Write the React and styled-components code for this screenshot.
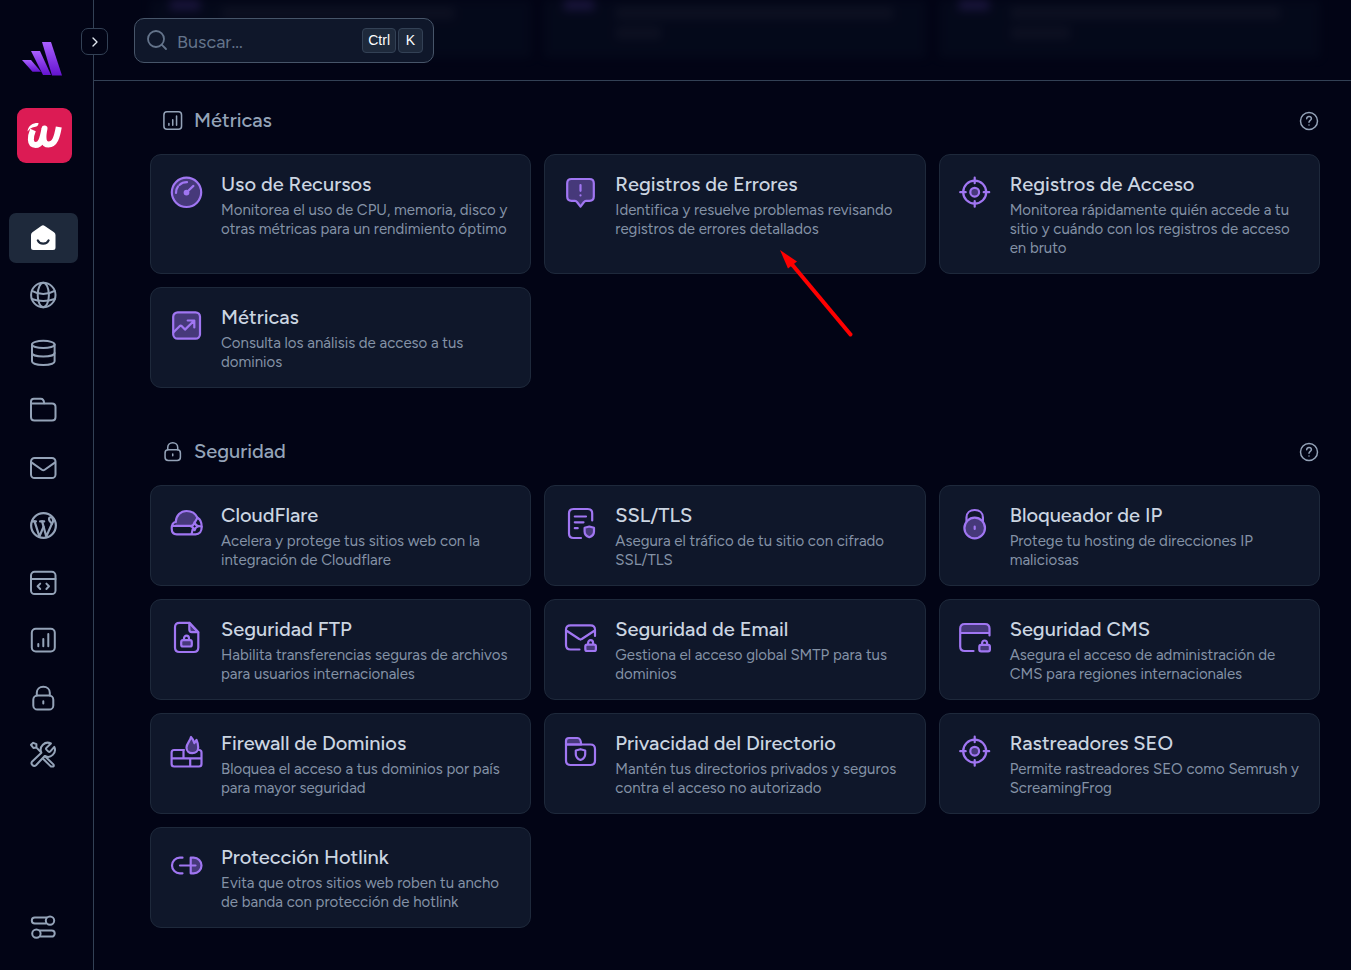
import React from 'react'
import styled, { createGlobalStyle } from 'styled-components'
import { ChevronRight, Search } from 'lucide-react'
import { TbBrandWordpress } from 'react-icons/tb'

const GlobalStyle = createGlobalStyle`
    *, *::before, *::after {
        box-sizing: border-box;
    }
    body {
        margin: 0;
        background-color: #020415;
        font-family: Figtree, Lato, "Liberation Sans", sans-serif;
    }
    a {
        color: inherit;
        text-decoration: none;
    }
    svg {
        display: block;
        flex-shrink: 0;
    }
`

const Page = styled.div`
    display: flex;
    min-height: 100vh;
`

const Sidebar = styled.aside`
    position: relative;
    display: flex;
    flex-direction: column;
    align-items: center;
    flex-shrink: 0;
    width: 94px;
    padding: 42px 15px 18px 9px;
    border-right: 1px solid #334155;
`

const Collapse = styled.button`
    position: absolute;
    top: 28px;
    right: -15px;
    z-index: 3;
    display: flex;
    align-items: center;
    justify-content: center;
    width: 27px;
    height: 27px;
    padding: 0;
    color: #e2e8f0;
    background-color: #020415;
    border: 1px solid #334155;
    border-radius: 7px;
    cursor: pointer;
`

const Brand = styled.a`
    margin: 0 2px 32px 0;
`

const Badge = styled.a`
    width: 55px;
    height: 55px;
    margin: 0 0 50px 2px;
    border-radius: 9px;
    background-color: #dc1b54;
`

const Nav = styled.nav`
    display: flex;
    flex-direction: column;
    justify-content: space-between;
    align-self: stretch;
    height: 567px;
    margin-bottom: auto;
`

const NavItem = styled.a`
    display: flex;
    align-items: center;
    justify-content: center;
    height: 50px;
    padding-right: 1px;
    border-radius: 7px;
    color: ${props => props.$active ? "#fff" : "#94a3b8"};
    background-color: ${props => props.$active ? "#1e293b" : "transparent"};
`

const Main = styled.main`
    flex: 1;
    min-width: 0;
`

const Header = styled.header`
    position: relative;
    display: flex;
    align-items: center;
    height: 81px;
    padding: 0 40px;
    border-bottom: 1px solid #334155;
`

/* what has scrolled under the header, seen through its frosted glass */
const Frosted = styled.div`
    position: absolute;
    inset: 0;
    display: grid;
    grid-template-columns: repeat(3, 1fr);
    gap: 13px;
    padding: 0 31px 22px 56px;
    overflow: hidden;
    filter: blur(5px);
    opacity: .28;
`

const FrostedCard = styled.div`
    display: flex;
    gap: 22px;
    padding-left: 20px;
    background-color: #0c1628;
`

const FrostedIcon = styled.div`
    width: 30px;
    height: 10px;
    background-color: #5a42a4;
`

const FrostedText = styled.div`
    display: flex;
    flex-direction: column;
    gap: 8px;
    padding-top: 7px;
`

const FrostedLine = styled.div`
    width: ${props => props.$width}px;
    height: 12px;
    background-color: #2a3142;
`

const SearchBox = styled.label`
    position: relative;
    display: flex;
    align-items: center;
    width: 300px;
    height: 45px;
    padding: 0 10px;
    color: #64748b;
    background-color: #0f172a;
    border: 1px solid #475569;
    border-radius: 10px;
`

const SearchInput = styled.input`
    flex: 1;
    min-width: 0;
    margin-left: 8px;
    padding: 3px 0 0;
    border: 0;
    outline: 0;
    background: transparent;
    color: #e2e8f0;
    font-family: inherit;
    font-size: 18px;
    &::placeholder {
        color: #64748b;
        opacity: 1;
    }
`

const Key = styled.kbd`
    min-width: 25px;
    height: 25px;
    margin-left: 2px;
    padding: 0 5px;
    border: 1px solid #334155;
    border-radius: 4px;
    background-color: #1e293b;
    color: #fff;
    font-family: "Liberation Sans", Arial, sans-serif;
    font-size: 14px;
    line-height: 22px;
    text-align: center;
`

const Content = styled.div`
    display: flex;
    flex-direction: column;
    gap: 51px;
    padding: 27px 31px 30px 56px;
`

const SectionHead = styled.div`
    display: flex;
    align-items: center;
    gap: 10px;
    height: 24px;
    margin-bottom: 22px;
    padding-left: 11px;
    color: #94a3b8;
`

const SectionTitle = styled.h2`
    flex: 1;
    margin: 0;
    font-size: 20px;
    font-weight: 500;
    line-height: 24px;
`

const HelpButton = styled.button`
    padding: 0;
    border: 0;
    background: none;
    color: #94a3b8;
    cursor: pointer;
`

const Grid = styled.div`
    display: grid;
    grid-template-columns: repeat(3, 1fr);
    gap: 13px;
`

const Card = styled.a`
    position: relative;
    display: flex;
    align-items: flex-start;
    gap: 17px;
    padding: 17px 19px 15px;
    border: 1px solid #1e293b;
    border-radius: 11px;
    background-color: #0f172a;
    & > svg {
        margin-top: 3px;
    }
`

const CardTitle = styled.h3`
    margin: 0 0 5px;
    color: #cbd5e1;
    font-size: 20px;
    font-weight: 500;
    line-height: 24px;
`

const CardText = styled.p`
    margin: 0;
    color: #8492a6;
    font-size: 15px;
    line-height: 19px;
`

const Pointer = styled.span`
    position: absolute;
    top: 95px;
    left: 235px;
    z-index: 2;
    pointer-events: none;
`

/* sidebar and section icons */

function LineIcon({ size = 30, stroke = 2, children }) {
  return (
    <svg width={size} height={size} viewBox="0 0 30 30" fill="none" stroke="currentColor"
        strokeWidth={stroke} strokeLinecap="round" strokeLinejoin="round" aria-hidden="true">
        {children}
    </svg>
  )
}

const lineIcons = {
    home: <>
        <path d="M13.200 2.900Q15 1.600 16.800 2.900L26 9.200Q27.500 10.300 27.500 12V24.500Q27.500 27 25 27H5.500Q3 27 3 24.500V12Q3 10.300 4.400 9.200Z" fill="currentColor" stroke="none" />
        <path d="M9.800 17.400C11.700 21.800 18.700 21.800 20.600 17.400" stroke="#1e293b" strokeWidth="2.200" />
    </>,
    globe: <>
        <circle cx="15.300" cy="15" r="12.200" />
        <ellipse cx="15.300" cy="15" rx="5.600" ry="12.200" />
        <path d="M4 10.800Q15.300 17.200 26.600 10.800M3.800 19Q15.300 23 26.800 19" />
    </>,
    database: <>
        <ellipse cx="15.300" cy="6.400" rx="11.300" ry="3.600" />
        <path d="M4 6.400V23.200C4 25.400 8.900 27 15.300 27S26.600 25.400 26.600 23.200V6.400" />
        <path d="M4 15C4 17 8.900 18.500 15.300 18.500S26.600 17 26.600 15" />
    </>,
    folder: <>
        <path d="M3 8.500V22Q3 25.500 6.500 25.500H24Q27.500 25.500 27.500 22V12Q27.500 8.500 24 8.500Z" />
        <path d="M3 9V6.500Q3 3.700 5.800 3.700H12.800Q15.900 3.700 16.100 8.300" />
    </>,
    mail: <>
        <rect x="3" y="5" width="24.500" height="20" rx="3.600" />
        <path d="M3.800 9.600L13.900 16.800Q15.300 17.800 16.700 16.800L26.800 9.600" />
    </>,
    code: <>
        <rect x="3" y="3.800" width="24.500" height="22.200" rx="3.600" />
        <path d="M3 11H27.500M12.200 15.600L9.600 18.300L12.200 21M18.400 15.600L21 18.300L18.400 21" />
    </>,
    chart: <>
        <rect x="3.800" y="3.700" width="23" height="22.800" rx="4" />
        <path d="M10.300 19V21.300M15.300 14V21.300M20.300 9V21.300" />
    </>,
    lock: <>
        <rect x="5.300" y="12.600" width="20" height="14" rx="4.200" />
        <path d="M8.800 12.600V9.800C8.800 6.200 11.600 3.700 15.300 3.700S21.800 6.200 21.800 9.800V12.600M15.300 18.200V20.600" />
    </>,
    tools: <>
        <path d="M3 4.800L5.200 2.800L8.400 4.200V7.400L5.400 8L3 4.800ZM8.200 7.400L12.600 11.800" />
        <path d="M18.400 7.900A1.300 1.300 0 0 0 18.400 9.600L20.400 11.600A1.300 1.300 0 0 0 22.100 11.600L26.300 6.900A7 7 0 0 1 16.700 16L8 25.200A2.700 2.700 0 0 1 4.200 21.400L13.400 12.700A7 7 0 0 1 22.900 3.500Z" />
        <path d="M17 16.200L25.600 24.600Q26.400 26.600 24.300 26.600H23L14.800 18.500" />
    </>,
    toggles: <>
        <circle cx="22" cy="8.600" r="4.200" />
        <path d="M17.800 11.600H6.800A3 3 0 0 1 6.800 5.600H18.700" />
        <circle cx="8.400" cy="21.600" r="4.200" />
        <path d="M12.600 24.600H23.700A3 3 0 0 0 23.700 18.600H11.700" />
    </>,
}

/* card icons: purple outline, some parts filled with the darker tone */

const tone = "#46397a"

function CardIcon({ children }) {
  return (
    <svg width="34" height="34" viewBox="0 0 34 34" fill="none" stroke="#a076f2"
        strokeWidth="2.200" strokeLinecap="round" strokeLinejoin="round" aria-hidden="true">
        {children}
    </svg>
  )
}

function SmallLock({ x, y }) {
  return (
    <g transform={`translate(${x} ${y})`}>
        <path d="M3.800 5.500V4A2.500 2.800 0 0 1 8.800 4V5.500" />
        <rect x="1" y="5.600" width="10.600" height="6.400" rx="1.800" fill={tone} />
    </g>
  )
}

const cardIcons = {
    gauge: <>
        <circle cx="16.500" cy="17.300" r="14.700" fill={tone} />
        <path d="M6 18C6 15 6.800 13 8 11.500M9.500 10C11.500 8 14 7.200 17 7.200M17 17L23.400 10.900" />
        <circle cx="16.500" cy="17.600" r="1.800" fill="#a076f2" />
    </>,
    errors: <>
        <path d="M7.500 4H25.500Q29.800 4 29.800 8.300V21.500Q29.800 25.800 25.500 25.800H22Q20.800 25.800 20 27L16.500 31.700L13 27Q12.200 25.800 11 25.800H7.500Q3.200 25.800 3.200 21.500V8.300Q3.200 4 7.500 4Z" fill={tone} />
        <path d="M16.500 10V15.800M16.500 20.400V20.500" />
    </>,
    target: <>
        <circle cx="15.700" cy="17.200" r="11.500" />
        <circle cx="15.700" cy="17.200" r="4.400" fill={tone} />
        <path d="M15.700 2.700V8.200M15.700 26.200V31.700M1.200 17.200H6.700M24.700 17.200H30.200" />
    </>,
    trend: <>
        <rect x="3.200" y="4.300" width="26.800" height="26.400" rx="4.500" fill={tone} />
        <path d="M3.500 24.300L9.600 18.200Q10.700 17.300 11.800 18.200L15 21.600L24 12.800M17.700 12.500H24.300V19.500" />
    </>,
    cloud: <>
        <path d="M5.600 19.500C3.800 11 9 5 16.500 5C21.500 5 25.800 7.800 27.500 12L24 17L20.500 20H6Z" fill={tone} stroke="none" />
        <path d="M5.700 16C6.200 9.500 10.500 5 16.500 5C21.500 5 25.600 7.600 27.500 11.800" />
        <path d="M5.700 16C3 16.500 1.700 19.500 1.700 22.500C1.700 26 3.500 28.300 6.800 28.300H25.500C29.500 28.300 31.700 25.200 31.700 21C31.700 16.500 30 13 27.500 11.800L24.800 16.400" />
        <path d="M2.800 19.800H20.500M24.600 16.200C25.200 18.800 26 19.600 28.600 20.200C26 20.800 25.200 21.600 24.600 24.200C24 21.600 23.200 20.800 20.600 20.200C23.200 19.600 24 18.800 24.600 16.200ZM22.800 22.800L21.600 28M28.500 20L31.500 20.500" />
    </>,
    certificate: <>
        <path d="M28.200 14.500V7.500Q28.200 3 23.700 3H9.500Q5 3 5 7.500V27.500Q5 32 9.500 32H17M10.800 10.500H22M10.800 16.300H19.500M10.800 22.200H13.700" />
        <path d="M25.300 20.500L30 21.800V25.500C30 28.500 28 30.300 25.300 31.200C22.600 30.300 20.600 28.500 20.600 25.500V21.800Z" fill={tone} />
    </>,
    padlock: <>
        <path d="M7.500 15V11.500C7.500 6.800 11 4 15.700 4S23.900 6.800 23.900 11.500V15" />
        <circle cx="15.700" cy="22" r="10.300" fill={tone} />
        <path d="M15.700 20.700V23" />
    </>,
    fileLock: <>
        <path d="M19.300 2.800V9.600Q19.300 12.200 21.900 12.200H28.200Z" fill={tone} />
        <path d="M19.300 2.800H9.500Q5 2.800 5 7.300V27.500Q5 32 9.500 32H23.800Q28.300 32 28.300 27.500V12.200L19.300 2.800Z" />
        <SmallLock x={10.200} y={14.500} />
    </>,
    mailLock: <>
        <path d="M31 16V9.800Q31 5.300 26.500 5.300H6.500Q2 5.300 2 9.800V25Q2 29.500 6.500 29.500H15.500M3 11L15.200 19Q16.500 20 17.800 19L30 11" />
        <SmallLock x={20.300} y={19} />
    </>,
    windowLock: <>
        <path d="M1.200 12.500V8.500Q1.200 4 5.700 4H26Q30.500 4 30.500 8.500V12.500Z" fill={tone} stroke="none" />
        <path d="M30.500 15.500V8.500Q30.500 4 26 4H5.700Q1.200 4 1.200 8.500V26.500Q1.200 31 5.700 31H14.500M1.200 13H30.500" />
        <SmallLock x={19.300} y={19.300} />
    </>,
    firewall: <>
        <path d="M1.600 24.300V18.500Q1.600 16 4.100 16H14M29 16Q31.500 16 31.500 18.500V24.300M1.600 24.300H31.500M1.600 24.300V30Q1.600 32.500 4.100 32.500H29Q31.500 32.500 31.500 30V24.300M13.500 16V24.300M20.200 24.300V32.500" />
        <path d="M21 3C20.500 6.500 16.500 9.500 16.500 13.500C16.500 17 19 19.200 22.300 19.200S28.200 17 28.200 13.500C28.200 11 27.500 8 26.500 6L24.300 9C23.700 6.500 22.500 4.500 21 3Z" fill={tone} />
    </>,
    folderShield: <>
        <path d="M2 10.500V7Q2 4 5 4H13.500Q16.800 4 17.200 10.500Z" fill={tone} />
        <path d="M2 10.500V26.500Q2 31 6.500 31H26.500Q31 31 31 26.500V15Q31 10.500 26.500 10.500Z" />
        <path d="M16.500 15.200L21.200 16.500V20.200C21.200 23 19.200 25 16.500 26C13.800 25 11.800 23 11.800 20.200V16.500Z" />
    </>,
    hotlink: <>
        <path d="M12.500 9.700H9.800A7.800 7.800 0 0 0 9.800 25.300H12.500" />
        <path d="M20.700 9.700H23.700A7.800 7.800 0 0 1 23.700 25.300H20.700Z" fill={tone} />
        <path d="M10 17.500H25.500" />
    </>,
}

const navItems = [
    { label: "Inicio", icon: "home", active: true },
    { label: "Dominios", icon: "globe" },
    { label: "Bases de datos", icon: "database" },
    { label: "Archivos", icon: "folder" },
    { label: "Email", icon: "mail" },
    { label: "WordPress", icon: "wordpress" },
    { label: "Desarrollo", icon: "code" },
    { label: "Métricas", icon: "chart" },
    { label: "Seguridad", icon: "lock" },
    { label: "Herramientas", icon: "tools" },
]

const sections = [
    {
        title: "Métricas",
        icon: "chart",
        cards: [
            { icon: "gauge", title: "Uso de Recursos", text: "Monitorea el uso de CPU, memoria, disco y otras métricas para un rendimiento óptimo" },
            { icon: "errors", title: "Registros de Errores", text: "Identifica y resuelve problemas revisando registros de errores detallados", pointed: true },
            { icon: "target", title: "Registros de Acceso", text: "Monitorea rápidamente quién accede a tu sitio y cuándo con los registros de acceso en bruto" },
            { icon: "trend", title: "Métricas", text: "Consulta los análisis de acceso a tus dominios" },
        ],
    },
    {
        title: "Seguridad",
        icon: "lock",
        cards: [
            { icon: "cloud", title: "CloudFlare", text: "Acelera y protege tus sitios web con la integración de Cloudflare" },
            { icon: "certificate", title: "SSL/TLS", text: "Asegura el tráfico de tu sitio con cifrado SSL/TLS" },
            { icon: "padlock", title: "Bloqueador de IP", text: "Protege tu hosting de direcciones IP maliciosas" },
            { icon: "fileLock", title: "Seguridad FTP", text: "Habilita transferencias seguras de archivos para usuarios internacionales" },
            { icon: "mailLock", title: "Seguridad de Email", text: "Gestiona el acceso global SMTP para tus dominios" },
            { icon: "windowLock", title: "Seguridad CMS", text: "Asegura el acceso de administración de CMS para regiones internacionales" },
            { icon: "firewall", title: "Firewall de Dominios", text: "Bloquea el acceso a tus dominios por país para mayor seguridad" },
            { icon: "folderShield", title: "Privacidad del Directorio", text: "Mantén tus directorios privados y seguros contra el acceso no autorizado" },
            { icon: "target", title: "Rastreadores SEO", text: "Permite rastreadores SEO como Semrush y ScreamingFrog" },
            { icon: "hotlink", title: "Protección Hotlink", text: "Evita que otros sitios web roben tu ancho de banda con protección de hotlink" },
        ],
    },
]

function Logo() {
  return (
    <svg width="42" height="34" viewBox="0 0 42 34" aria-hidden="true">
        <defs>
            <linearGradient id="bars" x1="0" y1="0" x2="0" y2="1">
                <stop offset="0" stopColor="#a960ff" />
                <stop offset="1" stopColor="#6413cf" />
            </linearGradient>
        </defs>
        <path d="M0 18H9L19 29.800H10.500Z" fill="url(#bars)" />
        <path d="M9 9H18L29 33H21Z" fill="url(#bars)" />
        <path d="M20 0H29L40 33.500H30Z" fill="url(#bars)" />
    </svg>
  )
}

function BadgeMark() {
  return (
    <svg width="55" height="55" viewBox="0 0 55 55" fill="none" stroke="#fff" aria-hidden="true">
        <path d="M16 22C13.500 28 12 37 18.500 37C24 37 25.500 31 27.500 20.500C25.500 30 26 36.500 31.500 36.500C38 36.500 40 29 41.800 19" strokeWidth="6" strokeLinejoin="round" />
        <path d="M10.500 23.500C11.500 17 16 14.800 21.500 15C21.500 19 18 18.500 15.500 19.500C13.500 20.200 12 21.500 10.500 23.500Z" fill="#fff" stroke="none" />
    </svg>
  )
}

function Arrow() {
  return (
    <svg width="74" height="88" viewBox="0 0 74 88" aria-hidden="true">
        <path d="M12.500 15L70.500 84.500" stroke="#fe0000" strokeWidth="4" strokeLinecap="round" />
        <path d="M0 0L17 11.500L8 18.500Z" fill="#fe0000" />
    </svg>
  )
}

function Section({ title, icon, cards }) {
  return (
    <section>
        <SectionHead>
            <LineIcon size={23}>{lineIcons[icon]}</LineIcon>
            <SectionTitle>{title}</SectionTitle>
            <HelpButton aria-label={`Ayuda: ${title}`}>
                <svg width="22" height="22" viewBox="0 0 22 22" fill="none" stroke="currentColor"
                    strokeWidth="1.500" strokeLinecap="round" strokeLinejoin="round">
                    <circle cx="11" cy="12" r="8.500" />
                    <path d="M8.700 9.800C8.700 8.400 9.700 7.600 11 7.600S13.400 8.500 13.400 9.800C13.400 11.300 11 11.600 11 13.200M11 16V16.100" />
                </svg>
            </HelpButton>
        </SectionHead>
        <Grid>
            {cards.map(card => (
                <Card key={card.title} href="#">
                    <CardIcon>{cardIcons[card.icon]}</CardIcon>
                    <div>
                        <CardTitle>{card.title}</CardTitle>
                        <CardText>{card.text}</CardText>
                    </div>
                    {card.pointed && <Pointer><Arrow /></Pointer>}
                </Card>
            ))}
        </Grid>
    </section>
  )
}

function App() {
  return (
    <>
        <GlobalStyle />
        <Page>
            <Sidebar>
                <Collapse aria-label="Expandir menú"><ChevronRight size={16} strokeWidth={2} /></Collapse>
                <Brand href="#" aria-label="Panel"><Logo /></Brand>
                <Badge href="#" aria-label="Cuenta"><BadgeMark /></Badge>
                <Nav>
                    {navItems.map(item => (
                        <NavItem key={item.label} href="#" aria-label={item.label} $active={item.active}>
                            {item.icon === "wordpress"
                                ? <TbBrandWordpress size={33} strokeWidth={1.6} />
                                : <LineIcon>{lineIcons[item.icon]}</LineIcon>}
                        </NavItem>
                    ))}
                </Nav>
                <NavItem href="#" aria-label="Preferencias">
                    <LineIcon>{lineIcons.toggles}</LineIcon>
                </NavItem>
            </Sidebar>
            <Main>
                <Header>
                    <Frosted aria-hidden="true">
                        {[[232, 0], [277, 45], [269, 59]].map(([first, second]) => (
                            <FrostedCard key={first}>
                                <FrostedIcon />
                                <FrostedText>
                                    <FrostedLine $width={first} />
                                    <FrostedLine $width={second} />
                                </FrostedText>
                            </FrostedCard>
                        ))}
                    </Frosted>
                    <SearchBox>
                        <Search size={24} strokeWidth={1.8} aria-hidden="true" />
                        <SearchInput type="text" placeholder="Buscar..." aria-label="Buscar" />
                        <Key>Ctrl</Key>
                        <Key>K</Key>
                    </SearchBox>
                </Header>
                <Content>
                    {sections.map(section => <Section key={section.title} {...section} />)}
                </Content>
            </Main>
        </Page>
    </>
  )
}

export default App
